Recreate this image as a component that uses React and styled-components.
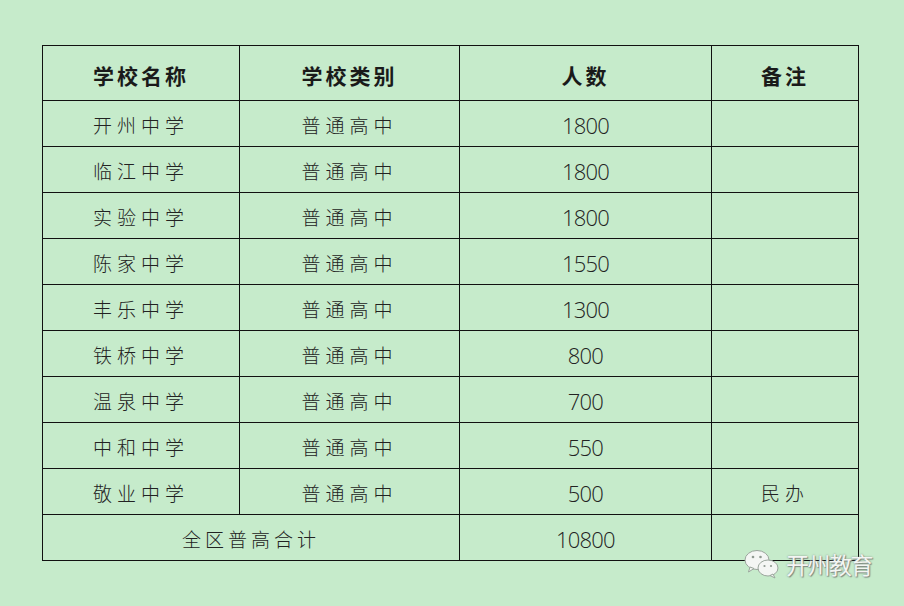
import styled, { createGlobalStyle } from 'styled-components';

const GlobalStyle = createGlobalStyle`
  html, body {
    margin: 0;
    padding: 0;
    background: #c6ebcb;
  }
`;

const rows = [
  ['开州中学', '普通高中', '1800', ''],
  ['临江中学', '普通高中', '1800', ''],
  ['实验中学', '普通高中', '1800', ''],
  ['陈家中学', '普通高中', '1550', ''],
  ['丰乐中学', '普通高中', '1300', ''],
  ['铁桥中学', '普通高中', '800', ''],
  ['温泉中学', '普通高中', '700', ''],
  ['中和中学', '普通高中', '550', ''],
  ['敬业中学', '普通高中', '500', '民办'],
];

export default function App() {
  return (
    <Page>
      <GlobalStyle />
      <Table>
        <colgroup>
          <col style={{ width: 197 }} />
          <col style={{ width: 220 }} />
          <col style={{ width: 252 }} />
          <col style={{ width: 147 }} />
        </colgroup>
        <thead>
          <tr>
            <Head>学校名称</Head>
            <Head>学校类别</Head>
            <Head>人数</Head>
            <Head>备注</Head>
          </tr>
        </thead>
        <tbody>
          {rows.map((r) => (
            <tr key={r[0]}>
              <Cell>{r[0]}</Cell>
              <Cell>{r[1]}</Cell>
              <Num>{r[2]}</Num>
              <Cell>{r[3]}</Cell>
            </tr>
          ))}
          <tr>
            <Cell colSpan={2} $wide>全区普高合计</Cell>
            <Num>10800</Num>
            <Cell />
          </tr>
        </tbody>
      </Table>
      <Watermark>
        <WeChatIcon />
        <MarkText>开州教育</MarkText>
      </Watermark>
    </Page>
  );
}

function WeChatIcon() {
  return (
    <svg width="36" height="30" viewBox="0 0 36 30">
      <g fill="#f4f6f4" stroke="#9aa59c" strokeWidth="1">
        <ellipse cx="13" cy="11" rx="12" ry="9.5" />
        <path d="M6 18 L4.5 23 L10 19.5 Z" />
        <ellipse cx="24" cy="19" rx="10" ry="8" />
        <path d="M29 25 L31 29 L26 26.5 Z" />
      </g>
      <g fill="#8f9a91">
        <circle cx="9" cy="8" r="1.3" />
        <circle cx="16.5" cy="8" r="1.3" />
        <circle cx="20.5" cy="17" r="1.1" />
        <circle cx="27" cy="17" r="1.1" />
      </g>
    </svg>
  );
}

const Page = styled.div`
  position: relative;
  width: 904px;
  height: 606px;
  padding: 45px 0 0 42px;
  box-sizing: border-box;
`;

const Table = styled.table`
  border-collapse: collapse;
  table-layout: fixed;
  width: 817px;
  color: #1a1a1a;
  font-family: "Noto Sans CJK SC", sans-serif;

  td, th {
    box-sizing: border-box;
    padding: 3px 0 0 0;
    line-height: 22px;
    border: 1px solid #111;
    text-align: center;
  }
`;

const Head = styled.th`
  height: 55px;
  font-size: 21px;
  font-weight: 700;
  letter-spacing: 3px;
`;

const Cell = styled.td`
  height: 46px;
  font-size: 19px;
  font-weight: 300;
  letter-spacing: ${(p) => (p.$wide ? '4px' : '5px')};
  color: #222;
`;

const Num = styled.td`
  height: 46px;
  font-family: "Open Sans", "Liberation Sans", sans-serif;
  font-size: 22px;
  font-weight: 300;
  letter-spacing: -0.8px;
  color: #222;
`;

const Watermark = styled.div`
  position: absolute;
  left: 744px;
  top: 549px;
  display: flex;
  align-items: center;
  gap: 6px;
`;

const MarkText = styled.span`
  font-family: "Noto Sans CJK SC", sans-serif;
  font-size: 23px;
  line-height: 28px;
  color: #f3f5f3;
  letter-spacing: -1.5px;
  text-shadow: 0 0 2px #7f8a81, 1px 1px 1px #7f8a81;
`;
